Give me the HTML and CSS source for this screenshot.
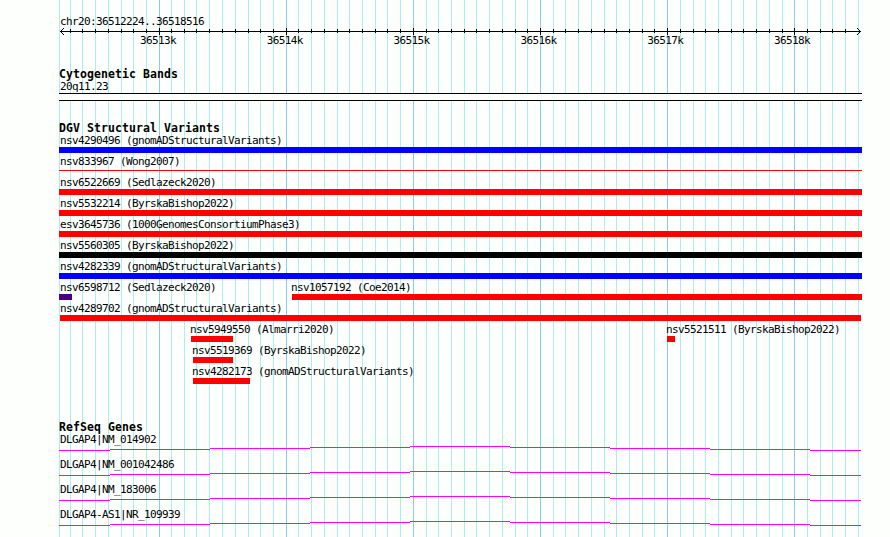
FILE: index.html
```
<!DOCTYPE html>
<html lang="en">
<head>
<meta charset="utf-8">
<title>chr20:36512224..36518516</title>
<link rel="stylesheet" href="styles.css">
</head>
<body>
<svg class="gridlines" width="890" height="537" shape-rendering="crispEdges" aria-hidden="true"><path id="minor" class="minor"/><path id="major" class="major"/></svg>
<main class="browser">
  <header class="overview">
    <div class="label">chr20:36512224..36518516</div>
    <svg class="ruler" width="804" height="9" shape-rendering="crispEdges" aria-hidden="true"><path id="ticks" d="M1 4h801v1h-801z"/><path d="M1 4h1v1h-1zM2 3h1v3h-1zM3 2h1v1h-1zM3 6h1v1h-1zM4 1h1v1h-1zM4 7h1v1h-1zM801 4h1v1h-1zM800 3h1v3h-1zM799 2h1v1h-1zM799 6h1v1h-1zM798 1h1v1h-1zM798 7h1v1h-1z"/></svg>
    <div class="scale"><span>36513k</span><span>36514k</span><span>36515k</span><span>36516k</span><span>36517k</span><span>36518k</span></div>
  </header>
  <section class="bands">
    <h2>Cytogenetic Bands</h2>
    <div class="label">20q11.23</div>
    <div class="band"></div>
  </section>
  <section class="variants">
    <h2>DGV Structural Variants</h2>
    <div id="variants"></div>
  </section>
  <section class="genes">
    <h2>RefSeq Genes</h2>
    <div id="genes"></div>
  </section>
</main>
<script src="script.js"></script>
</body>
</html>
```
FILE: styles.css
```
body {
  margin: 0;
  width: 890px;
  height: 537px;
  overflow: hidden;
  background: #fdfffc;
  color: #000;
  font: 11px/13px "DejaVu Sans Mono", monospace;
  letter-spacing: -0.622px;
}
.gridlines {
  position: absolute;
  top: 0;
  left: 0;
  z-index: -1;
}
.minor { fill: #afeeee; }
.major { fill: #87ceeb; }
.browser {
  width: 803px;
  margin-left: 59px;
  padding-top: 15px;
}
h2 {
  margin: 0;
  font-size: 11.5px;
  line-height: 13px;
  letter-spacing: 0.077px;
  white-space: pre;
}
.label {
  height: 12px;
  padding-left: 1px;
  line-height: 13px;
  white-space: pre;
}
.overview { height: 53px; }
.ruler { display: block; }
.scale {
  display: flex;
  gap: 90.8px;
  margin-top: -2px;
  padding-left: 81px;
}
.scale span { width: 36px; }
.bands { height: 54px; }
.bands h2, .variants h2, .genes h2 { height: 12px; }
.band {
  height: 6px;
  margin-top: 1px;
  border: solid #000;
  border-width: 1px 0;
  background: #fdfffc;
}
.variants { height: 299px; }
.row {
  display: grid;
  height: 21px;
}
.feature {
  grid-area: 1 / 1;
  margin-left: var(--start);
}
.feature .inset {
  margin-left: -1px;
  padding-left: 0;
}
.feature .flush { padding-left: 0; }
.bar {
  width: var(--length);
  height: 6px;
  margin-top: 1px;
}
.loss { background: #f00; }
.gain { background: #00f; }
.complex { background: #000; }
.both { background: #4b0082; }
.thin {
  height: 1px;
  margin-top: 3px;
  background: #f00;
}
.gene { height: 25px; }
.gene svg { display: block; }
.gene path { fill: #f0f; }
```
FILE: script.js
```
const major = [159, 286, 413, 540, 667, 794];
const minor = [59, 70, 82, 95, 108, 121, 133, 146, 171, 184, 196, 209, 222, 235, 248, 260, 273,
  298, 311, 324, 337, 349, 362, 375, 387, 400, 426, 438, 451, 464, 476, 489, 502, 515, 527,
  553, 565, 578, 591, 604, 616, 629, 642, 654, 680, 693, 705, 718, 731, 743, 756, 769, 782,
  807, 820, 832, 845, 858];
const bars = (xs, y, h) => xs.map(x => `M${x} ${y}h1v${h}h-1z`).join('');
document.getElementById('minor').setAttribute('d', bars(minor, 0, 537));
document.getElementById('major').setAttribute('d', bars(major, 0, 537));
const ticks = document.getElementById('ticks');
ticks.setAttribute('d', ticks.getAttribute('d') +
  bars(minor.slice(1, -1).map(x => x - 59), 2, 4) + bars(major.map(x => x - 59), 1, 7));

// Each feature: name, start, length, type
const rows = [
  [['nsv4290496 (gnomADStructuralVariants)', 0, 803, 'gain']],
  [['nsv833967 (Wong2007)', 0, 803, 'thin']],
  [['nsv6522669 (Sedlazeck2020)', 0, 803, 'loss']],
  [['nsv5532214 (ByrskaBishop2022)', 0, 803, 'loss']],
  [['esv3645736 (1000GenomesConsortiumPhase3)', 0, 803, 'loss']],
  [['nsv5560305 (ByrskaBishop2022)', 0, 803, 'complex']],
  [['nsv4282339 (gnomADStructuralVariants)', 0, 803, 'gain']],
  [['nsv6598712 (Sedlazeck2020)', 0, 13, 'both'], ['nsv1057192 (Coe2014)', 233, 570, 'loss']],
  [['nsv4289702 (gnomADStructuralVariants)', 1, 801, 'loss']],
  [['nsv5949550 (Almarri2020)', 132, 42, 'loss'], ['nsv5521511 (ByrskaBishop2022)', 608, 8, 'loss']],
  [['nsv5519369 (ByrskaBishop2022)', 134, 40, 'loss']],
  [['nsv4282173 (gnomADStructuralVariants)', 134, 57, 'loss']]
];
const labelClass = start => start > 1 ? 'label inset' : start === 1 ? 'label flush' : 'label';
document.getElementById('variants').innerHTML = rows.map(row => '<div class="row">' +
  row.map(([name, start, length, type]) =>
    `<div class="feature" style="--start:${start}px;--length:${length}px">` +
    `<div class="${labelClass(start)}">${name}</div>` +
    `<div class="bar ${type}"></div></div>`).join('') + '</div>').join('');

const intron = 'M0 5h51v1h-51zM51 4h100v1h-100zM151 3h100v1h-100zM251 2h100v1h-100z' +
  'M351 1h100v1h-100zM451 2h100v1h-100zM551 3h100v1h-100zM651 4h100v1h-100zM751 5h51v1h-51z';
document.getElementById('genes').innerHTML =
  ['DLGAP4|NM_014902', 'DLGAP4|NM_001042486', 'DLGAP4|NM_183006', 'DLGAP4-AS1|NR_109939'].map(name =>
    `<div class="gene"><div class="label">${name}</div>` +
    `<svg width="803" height="8" shape-rendering="crispEdges"><path d="${intron}"/></svg></div>`).join('');
```
